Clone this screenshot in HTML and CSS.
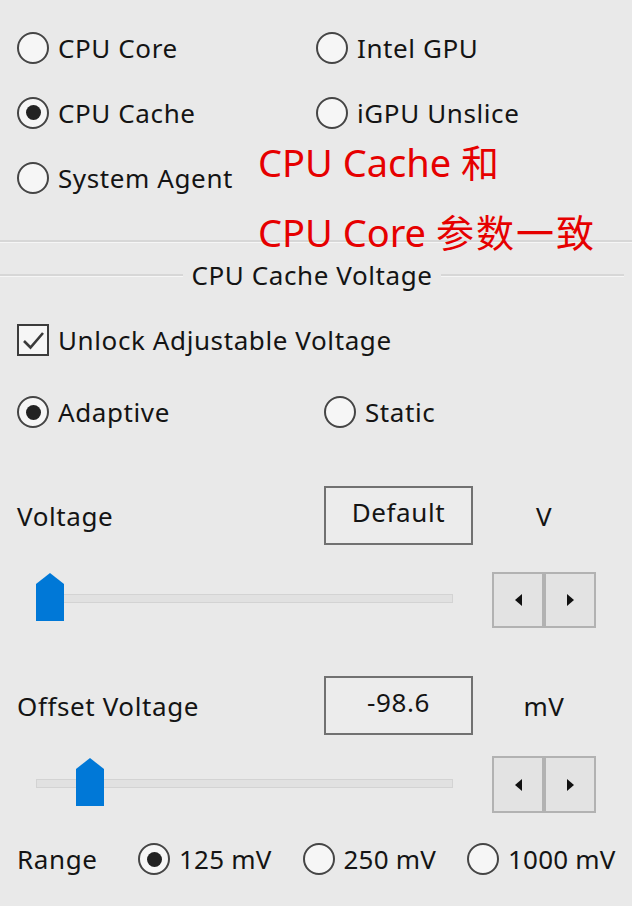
FILE: index.html
```html
<!DOCTYPE html>
<html lang="en">
<head>
    <meta charset="UTF-8">
    <meta name="viewport" content="width=device-width, initial-scale=1.0">
    <title>CPU Cache Voltage</title>
    <link rel="stylesheet" href="styles.css">
</head>
<body>
    <div class="panel">
        <!-- Voltage source select -->
        <div class="source-group">
            <label class="option"><span class="radio"></span>CPU Core</label>
            <label class="option"><span class="radio"></span>Intel GPU</label>
            <label class="option"><span class="radio on"></span>CPU Cache</label>
            <label class="option"><span class="radio"></span>iGPU Unslice</label>
            <label class="option"><span class="radio"></span>System Agent</label>
            <div class="note">CPU Cache 和<br>CPU Core <span class="cjk">参数一致</span></div>
        </div>

        <div class="divider"></div>

        <div class="group-title"><span>CPU Cache Voltage</span></div>

        <!-- Unlock -->
        <div class="row check-row">
            <label class="option">
                <span class="checkbox">
                    <svg width="27" height="27" viewBox="0 0 27 27"><path d="M4 14 L10.5 20.5 L23 6" fill="none" stroke="#3a3a3a" stroke-width="2.6"/></svg>
                </span>
                Unlock Adjustable Voltage
            </label>
        </div>

        <!-- Mode -->
        <div class="row mode-row">
            <label class="option"><span class="radio on"></span>Adaptive</label>
            <label class="option"><span class="radio"></span>Static</label>
        </div>

        <!-- Voltage -->
        <div class="row value-row voltage-row">
            <span class="value-label">Voltage</span>
            <div class="value-box">Default</div>
            <span class="unit">V</span>
        </div>
        <div class="slider-row first-slider">
            <div class="slider">
                <div class="track"></div>
                <div class="thumb" style="left: 0px"></div>
            </div>
            <div class="spin">
                <button class="spin-btn left"></button>
                <button class="spin-btn right"></button>
            </div>
        </div>

        <!-- Offset -->
        <div class="row value-row offset-row">
            <span class="value-label">Offset Voltage</span>
            <div class="value-box">-98.6</div>
            <span class="unit">mV</span>
        </div>
        <div class="slider-row second-slider">
            <div class="slider">
                <div class="track"></div>
                <div class="thumb" style="left: 40px"></div>
            </div>
            <div class="spin">
                <button class="spin-btn left"></button>
                <button class="spin-btn right"></button>
            </div>
        </div>

        <!-- Range -->
        <div class="row range-row">
            <span class="range-label">Range</span>
            <div class="range-options">
                <label class="option"><span class="radio on"></span>125 mV</label>
                <label class="option"><span class="radio"></span>250 mV</label>
                <label class="option"><span class="radio"></span>1000 mV</label>
            </div>
        </div>
    </div>
</body>
</html>
```

FILE: styles.css
```css
/* General */
body {
    margin: 0;
    background-color: #e9e9e9;
    font-family: "Noto Sans", "Liberation Sans", sans-serif;
    font-size: 26px;
    letter-spacing: 0.6px;
    color: #141414;
}

.panel {
    width: 632px;
}

/* Radio / option */
.option {
    display: flex;
    align-items: center;
    gap: 9px;
    height: 65px;
    white-space: nowrap;
}

.radio {
    flex: none;
    width: 32px;
    height: 32px;
    box-sizing: border-box;
    border: 2.5px solid #454545;
    border-radius: 50%;
    background: #f6f6f6;
    display: flex;
    align-items: center;
    justify-content: center;
}

.radio.on::after {
    content: "";
    width: 15px;
    height: 15px;
    border-radius: 50%;
    background: #222;
}

.checkbox {
    flex: none;
    width: 32px;
    height: 32px;
    box-sizing: border-box;
    border: 2.5px solid #3c3c3c;
    background: #f6f6f6;
    display: flex;
    align-items: center;
    justify-content: center;
}

/* Top group */
.source-group {
    position: relative;
    display: grid;
    grid-template-columns: 299px 1fr;
    padding: 15px 17px 0;
}

.note {
    position: absolute;
    left: 258px;
    top: 127px;
    font-family: "Noto Sans", "Noto Sans CJK SC", sans-serif;
    font-size: 38px;
    line-height: 70px;
    letter-spacing: 0;
    color: #e60000;
    white-space: nowrap;
}

.note .cjk {
    letter-spacing: 2px;
}

.divider {
    margin-top: 30px;
    height: 2px;
    background: #d7d7d7;
    box-shadow: 0 1px 0 #f6f6f6;
}

/* Group box title */
.group-title {
    display: flex;
    align-items: center;
    height: 30px;
    margin-top: 18px;
    padding-right: 8px;
}

.group-title::before,
.group-title::after {
    content: "";
    flex: 1;
    height: 2px;
    background: #d7d7d7;
    box-shadow: 0 1px 0 #f6f6f6;
}

.group-title span {
    padding: 0 8px;
}

/* Rows */
.row {
    display: flex;
    align-items: center;
    padding-left: 17px;
}

.row .option {
    height: 40px;
}

.check-row {
    margin-top: 30px;
    height: 40px;
}

.mode-row {
    display: grid;
    grid-template-columns: 307px auto;
    margin-top: 32px;
    height: 40px;
}

.value-row {
    display: grid;
    grid-template-columns: 307px 149px 142px;
    height: 59px;
}

.voltage-row {
    margin-top: 54px;
}

.offset-row {
    margin-top: 48px;
}

.value-box {
    height: 59px;
    box-sizing: border-box;
    border: 2px solid #717171;
    background: #ececec;
    display: flex;
    align-items: center;
    justify-content: center;
    padding-bottom: 7px;
}

.unit {
    text-align: center;
}

/* Slider */
.slider-row {
    display: flex;
    padding-left: 36px;
}

.first-slider {
    margin-top: 27px;
    height: 56px;
}

.second-slider {
    margin-top: 21px;
    height: 57px;
}

.slider {
    position: relative;
    width: 417px;
}

.track {
    margin-top: 22px;
    height: 9px;
    box-sizing: border-box;
    background: #e1e1e1;
    border: 1px solid #d3d3d3;
}

.second-slider .track {
    margin-top: 23px;
}

.thumb {
    position: absolute;
    top: 1px;
    width: 28px;
    height: 48px;
    background: #0078d7;
    clip-path: polygon(0 11px, 14px 0, 28px 11px, 28px 100%, 0 100%);
}

.second-slider .thumb {
    top: 2px;
}

.spin {
    display: flex;
    margin-left: 39px;
}

.spin-btn {
    width: 52px;
    height: 100%;
    box-sizing: border-box;
    border: 2px solid #b2b2b2;
    background: #e3e3e3;
    padding: 0;
    display: flex;
    align-items: center;
    justify-content: center;
}

.spin-btn::after {
    content: "";
    border-top: 6px solid transparent;
    border-bottom: 6px solid transparent;
}

.spin-btn.left::after {
    border-right: 7px solid #111;
}

.spin-btn.right::after {
    border-left: 7px solid #111;
}

/* Range */
.range-row {
    margin-top: 26px;
    height: 40px;
}

.range-label {
    width: 121px;
}

.range-options {
    display: flex;
    gap: 31px;
    letter-spacing: 0.2px;
}

.range-options .option {
    gap: 9px;
}
```
